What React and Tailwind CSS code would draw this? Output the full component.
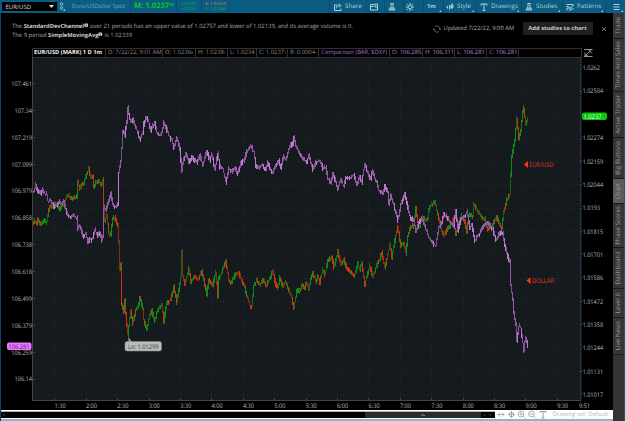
import React from "react";

const DOLLAR = "33,191 35,185 36,189 38,192 40,194 42,190 44,194 46,194 47,201 50,200 53,206 56,205 59,202 61,205 63,201 65,210 67,215 70,217 73,216 76,218 77,229 79,226 82,236 85,234 87,242 89,239 91,240 94,230 97,236 99,232 101,241 102,237 103,208 105,210 107,204 110,194 112,204 114,207 117,204 118,172 120,162 121,148 122,132 123,131 124,136 126,122 127,108 128,114 130,122 132,118 134,126 136,130 139,139 142,133 143,124 146,116 148,123 150,130 154,122 156,133 160,136 163,123 166,130 168,136 171,140 173,148 176,137 179,150 181,171 183,159 185,154 188,162 191,157 196,162 199,156 202,165 206,151 209,160 211,154 214,170 217,153 219,167 222,168 225,182 228,169 231,172 234,168 237,174 240,163 243,161 246,152 250,146 253,152 255,165 258,168 261,165 265,169 267,162 270,170 272,173 275,164 278,161 280,167 283,156 285,160 288,150 290,145 292,143 293,137 295,146 298,152 302,158 306,162 308,155 312,170 315,163 319,161 322,168 325,167 327,179 330,183 332,174 335,182 337,189 340,179 343,186 345,177 350,178 353,174 356,185 359,177 361,182 364,164 368,176 370,178 372,170 374,178 376,182 378,190 382,194 384,185 387,192 388,204 390,195 393,205 397,220 400,205 404,193 408,212 410,218 413,220 415,232 418,222 421,219 425,229 428,237 432,243 435,246 438,228 441,222 443,214 447,218 450,224 453,226 455,210 457,230 460,219 463,217 466,212 469,228 471,224 474,240 477,236 480,231 483,225 486,223 489,225 492,230 495,240 499,233 502,232 503,240 506,253 509,262 510,285 512,300 513,312 515,325 516,341 518,326 520,328 522,343 523,351 524,342 525,338 527,346";
const EURO = "33,221 36,223 37,219 40,224 42,222 44,220 46,222 48,209 50,206 52,207 54,204 57,205 59,210 62,203 63,207 65,199 67,194 70,198 76,197 77,181 79,190 81,184 83,182 85,177 87,171 88,168 90,178 92,176 93,186 95,182 98,181 101,184 102,180 103,206 104,222 106,216 108,233 110,234 112,218 114,217 117,226 118,243 119,270 120,263 121,303 123,311 124,300 126,325 127,335 130,310 132,323 135,310 138,304 139,297 142,308 143,320 146,329 148,320 151,310 154,321 157,310 161,304 163,321 166,303 170,300 173,286 176,302 178,290 180,278 181,252 182,276 184,285 188,268 190,282 194,276 198,279 201,271 203,280 206,294 208,280 212,285 215,272 217,296 218,278 221,272 225,260 228,280 231,282 235,273 238,272 241,282 243,284 246,295 249,305 251,306 253,285 256,280 260,284 262,279 265,286 268,280 272,272 275,285 277,288 279,278 282,287 285,282 289,293 291,297 293,308 296,290 299,291 301,285 304,288 306,282 308,290 310,278 312,272 315,282 317,276 319,282 322,270 324,275 327,260 331,257 333,267 335,261 337,250 340,265 343,260 346,268 350,272 354,275 357,262 359,270 361,263 364,285 366,277 369,266 372,278 376,265 380,256 381,253 384,268 387,255 389,244 391,257 394,240 397,227 400,245 403,244 405,253 407,236 409,228 413,225 415,208 418,228 422,218 427,219 428,210 430,205 434,202 437,214 440,228 443,236 447,228 450,225 452,218 455,234 458,222 461,216 464,222 466,232 468,215 472,216 473,204 477,211 480,216 484,219 487,229 491,226 496,217 499,225 501,228 503,212 506,200 509,195 510,175 511,157 513,145 514,140 516,118 518,138 520,130 522,112 523,108 525,124 527,118";

// Expands control points into one bar per pixel column.
function bars(points, seed, minimum) {
  const p = points.split(" ").map((s) => s.split(",").map(Number));
  const out = [];
  let k = 0;
  let prev = p[0][1];
  let s = seed;
  const next = () => {
    s = (s * 16807) % 2147483647;
    return s / 2147483647;
  };
  for (let x = p[0][0]; x <= p[p.length - 1][0]; x++) {
    while (k < p.length - 2 && x > p[k + 1][0]) k++;
    const [x0, y0] = p[k];
    const [x1, y1] = p[k + 1];
    const y = y0 + ((y1 - y0) * (x - x0)) / (x1 - x0);
    const r = next();
    const q = next();
    const top = Math.round(Math.min(prev, y) - r * 2.9);
    const bottom = Math.round(Math.max(prev, y) + q * 2.9);
    const d = y - prev;
    const noisy = next() > 0.72;
    const up = Math.abs(d) < 0.9 ? r > 0.5 : Math.abs(d) < 5 && noisy ? d > 0 : d < 0;
    out.push({ x, top, h: Math.max(minimum, bottom - top), up, q });
    prev = y;
  }
  return out;
}

const euroBars = bars(EURO, 4711, 4);
const dollarBars = bars(DOLLAR, 977, 2);
const left = ["107.461", "107.34", "107.219", "107.099", "106.979", "106.858", "106.738", "106.618", "106.499", "106.379", "106.259", "106.14"];
const right = ["1.0262", "1.02504", "", "1.02274", "1.02159", "1.02044", "1.0193", "1.01815", "1.01701", "1.01586", "1.01472", "1.01358", "1.01244", "1.01131", "1.01017"];
const times = ["1:30", "2:00", "2:30", "3:00", "3:30", "4:00", "4:30", "5:00", "5:30", "6:00", "6:30", "7:00", "7:30", "8:00", "8:30", "9:00", "9:30"];

const len = (t, digit = 3.18) => [...t].reduce((a, c) => a + (c === "." || c === ":" ? 1.6 : digit), 0);

function Chart() {
  return (
    <svg className="block h-[352px] w-[612px]" viewBox="1 58 612 352" fontSize="6.4">
      <rect x="33" y="58" width="549" height="342" fill="#151a1e" />
      <g stroke="#21282c" strokeWidth="1" strokeDasharray="1 2" shapeRendering="crispEdges">
        {times.map((t, i) => <path key={t} d={`M${Math.round(54.3 + i * 31.4) + 0.5} 59V400`} />)}
        {right.map((_, i) => <path key={i} d={`M34 ${Math.round(67.5 + i * 23.35) + 0.5}H581`} />)}
      </g>
      <g stroke="#434648" fill="none" shapeRendering="crispEdges">
        <path d="M32.5 58V400.5H581" />
        <path d="M580.5 58V400" strokeDasharray="1 1" />
        {times.map((t, i) => <path key={t} d={`M${Math.round(54.3 + i * 31.4) + 0.5} 398V400`} />)}
        {left.map((t, i) => <path key={t} d={`M33 ${Math.round(83.3 + i * 26.85) + 0.5}h2`} />)}
        {right.map((_, i) => <path key={i} d={`M580 ${Math.round(67.5 + i * 23.35) + 0.5}h2`} />)}
      </g>
      <g shapeRendering="crispEdges">
        {euroBars.map((b) => <rect key={b.x} x={b.x} y={b.top} width="1" height={b.h} fill={b.up ? (b.q > 0.4 ? "#128a16" : "#116818") : b.q > 0.4 ? "#c0390f" : "#82310f"} />)}
        {dollarBars.map((b) => <rect key={b.x} x={b.x} y={b.top} width="1" height={b.h} fill={b.q > 0.7 ? "#bb78cd" : b.q > 0.3 ? "#9659a5" : "#7d4f8b"} />)}
      </g>
      <g fill="#bdbdbd">
        {left.map((t, i) => <text key={t} x={32 - len(t)} y={86 + i * 26.85} textLength={len(t)} lengthAdjust="spacingAndGlyphs">{t}</text>)}
        {right.map((t, i) => t && <text key={t} x="582.5" y={70.1 + i * 23.35} textLength={len(t)} lengthAdjust="spacingAndGlyphs">{t}</text>)}
        {times.map((t, i) => <text key={t} x={54.5 + i * 31.4} y="408" textLength={len(t)} lengthAdjust="spacingAndGlyphs">{t}</text>)}
        <text x="579" y="408" textLength={len("9:51")} lengthAdjust="spacingAndGlyphs">9:51</text>
      </g>
      <rect x="582" y="112.5" width="25" height="7.5" rx="2" fill="#08c70a" />
      <text x="583.5" y="118.5" fill="#e8ffe8" textLength="18" lengthAdjust="spacingAndGlyphs">1.0237</text>
      <text x="602" y="118.5" fontSize="4" fill="#a6efa6">₇</text>
      <rect x="7" y="342.5" width="24.5" height="7.5" rx="2" fill="#e878ff" />
      <text x="8.5" y="348.5" fill="#5c1c69" textLength="21" lengthAdjust="spacingAndGlyphs">106.281</text>
      <path d="M128 337l1 5 3 0z" fill="#bbb" />
      <rect x="125" y="341.5" width="36.5" height="9.5" rx="2" fill="#b9bcb9" stroke="#858885" strokeWidth=".6" />
      <text x="128" y="348.6" fill="#343734" textLength="30.5" lengthAdjust="spacingAndGlyphs">Lo: 1.01299</text>
      <g fill="#ff3503">
        <path d="M524 164.5l4-3.5v7zM526.5 280.5l4-3.5v7z" />
        <g fill="#e03c16">
          <text x="529" y="166.8" textLength="24.5" lengthAdjust="spacingAndGlyphs">EUR/USD</text>
          <text x="532" y="282.5" textLength="22" lengthAdjust="spacingAndGlyphs">DOLLAR</text>
        </g>
      </g>
    </svg>
  );
}

const Icon = ({ d, className }) => (
  <svg className={"shrink-0 " + className} viewBox="0 0 16 16" fill="none" stroke="currentColor" strokeWidth="2"><path d={d} /></svg>
);
const FLASK = "M5 1h6M6 1v6L2 14h12L10 7V1M4 12h8M5 10h6";

function Tool({ w, label, d, more, pad = "pl-[4px]" }) {
  return (
    <div className={`relative flex h-full shrink-0 items-center gap-[3px] border-l border-[#0a4d6e] ${pad} ${w}`}>
      {d && <Icon d={d} className="h-[8px] w-[8px]" />}
      {label && <span className="whitespace-nowrap">{label}</span>}
      {more && <svg className="absolute right-[2px] bottom-[1px] h-[2px] w-[2px]" viewBox="0 0 2 2"><path d="M2 0v2H0z" fill="#b9d0dc" /></svg>}
    </div>
  );
}

function TopBar() {
  return (
    <header className="flex h-[13px] w-full items-center bg-[#0b5c83] text-[6.2px] leading-none text-[#b4ccd8]">
      <div className="ml-[2px] flex h-[9px] w-[55px] shrink-0 items-center justify-between bg-black px-[3.5px] text-[6px] text-[#ddd]">
        <span>EUR/USD</span>
        <svg className="h-[3px] w-[5px]" viewBox="0 0 5 3"><path d="M0 0h5L2.5 3z" fill="#ddd" /></svg>
      </div>
      <div className="flex h-full w-[10px] shrink-0 items-center justify-center">
        <svg className="h-[9px] w-[6px]" viewBox="0 0 6 9" fill="none" stroke="#9cbccb"><circle cx="2.5" cy="2" r="1.3" /><circle cx="2.5" cy="6" r="1.3" /><path d="M6 7v2H4z" fill="#c5d8e0" stroke="none" /></svg>
      </div>
      <div className="w-[63px] shrink-0 whitespace-nowrap pl-[5px] text-[5.9px] text-[#6da3bd]">Euro/USDollar Spot</div>
      <div className="flex h-full w-[46px] shrink-0 items-center whitespace-nowrap border-l border-[#0a4d6e] pl-[3px] text-[7.6px] font-bold text-[#0ac51c]">M: 1.0237<sup className="top-[-1px] text-[4px]">65</sup></div>
      <div className="flex h-full w-[25px] shrink-0 flex-col justify-center gap-[1px] border-l border-[#0a4d6e] pl-[4px] text-[4.3px] text-[#12a94c]"><span>+.00097</span><span>+0.09%</span></div>
      <div className="flex h-full w-[29px] shrink-0 flex-col justify-center gap-[1px] border-x border-[#0a4d6e] pl-[3px] text-[4.3px] text-[#12a94c]"><span className="text-[#d67650]">B: 1.02369</span><span>A: 1.02384</span></div>
      <div className="flex-1" />
      <Tool w="w-[37px]" label="Share" d="M7 4H1v11h13v-4M4 11c0-5 4-6 8-6M10 1l4 4-4 4" pad="pl-[4px]" />
      <Tool w="w-[18px]" d="M1 3h8M1 3v11h14V8M10 2h5v6h-5zM1 7h6" pad="pl-[3px]" />
      <Tool w="w-[19px]" d={FLASK} pad="pl-[3px]" />
      <Tool w="w-[20px]" d="M8 4.5a3.5 3.5 0 1 0 .01 0M8 0v4M8 12v4M0 8h4M12 8h4M2 2l3 3M11 11l3 3M14 2l-3 3M5 11l-3 3" pad="pl-[2px]" />
      <Tool w="w-[20px]" label={<b className="text-[5.6px]">1m</b>} more pad="pl-[3px]" />
      <Tool w="w-[33px]" label="Style" d="M1 8h3M3 6v5M7 4v9M7 8l3 3M12 1v11M10 4h4v5h-4z" more pad="pl-[2px]" />
      <Tool w="w-[45px]" label="Drawings" d="M2 5V2h12v3M8 2v13M5 15h6" more pad="pl-[3px]" />
      <Tool w="w-[41px]" label="Studies" d={FLASK} more pad="pl-[3px]" />
      <Tool w="w-[43px]" label="Patterns" d="M1 3h14M1 7h4l4 4 6-7M2 15V10h7M6 15l9-4" more pad="pl-[3px]" />
      <Tool w="w-[20px]" d="M3 3h12M3 8h12M3 13h12" more pad="pl-[6px]" />
    </header>
  );
}

function Ohlc({ w, k, v, s }) {
  return <div className={`flex h-full shrink-0 items-center whitespace-pre border-r border-[#303030] pl-[2px] ${w}`}>{k}{v}{s && <span className="mt-[2px] text-[3.5px]">{s}</span>}</div>;
}

const tabs = [
  ["Trade", "h-[26px]"], ["Times And Sales", "h-[53px]"], ["Active Trader", "h-[46px]"], ["Big Buttons", "h-[41px]"], ["Chart", "h-[25px] !bg-[#5b5b5b]"],
  ["Phase Scores", "h-[44px]"], ["Dashboard", "h-[41px]"], ["Level II", "h-[29px]"], ["Live News", "h-[37px]"],
];

export default function App() {
  return (
    <div className="flex h-[421px] w-[625px] flex-col overflow-hidden bg-black [text-rendering:geometricPrecision]" style={{ fontFamily: '"Open Sans", "Noto Sans", sans-serif' }}>
      <TopBar />
      <div className="flex min-h-0 flex-1">
        <div className="w-px shrink-0 bg-[#0b4460]" />
        <main className="flex w-[612px] shrink-0 flex-col">
          <div className="flex h-[34px] shrink-0 items-start text-[5.9px] text-[#a8a8a8]">
            <div className="w-[422px] whitespace-nowrap pl-[11px] pt-[9px] leading-[8.7px]">
              <p>The <b className="text-[5.7px] text-[#ccc]">StandardDevChannel<Info /></b><span className="tracking-[-0.02px]"> over 21 periods has an upper value of 1.02757 and lower of 1.02139, and its average volume is 0.</span></p>
              <p>The 9 period <b className="text-[5.7px] text-[#ccc]">SimpleMovingAvg<Info /></b> is 1.02339</p>
            </div>
            <div className="flex w-[190px] items-center pt-[9px]">
              <svg className="ml-[10px] mr-[2.5px] h-[8px] w-[8px] shrink-0" viewBox="0 0 8 8" fill="none" stroke="#888" strokeWidth=".7"><path d="M2 1.5a3.2 3.2 0 0 1 5 3M6 6.6A3.2 3.2 0 0 1 1 4M0 4.6L1 3.7l1 1M6 3.9l1 1 .8-1" /></svg>
              <span className="w-[79px] whitespace-nowrap text-[5.8px] text-[#b0b0b0]">Updated 7/22/22, 9:00 AM</span>
              <button className="h-[13px] w-[70px] shrink-0 whitespace-nowrap bg-[#202020] text-[5.8px] font-bold text-[#ccc]">Add studies to chart</button>
              <svg className="ml-[9px] h-[4px] w-[4px]" viewBox="0 0 4 4" stroke="#888" strokeWidth=".8"><path d="M0 0l4 4M4 0L0 4" /></svg>
            </div>
          </div>
          <div className="flex h-[11px] shrink-0 items-center pl-[31px]">
            <div className="flex h-[10px] w-[550px] border border-[#303030] text-[5.9px] leading-none text-[#8c8c8c]">
              <div className="flex w-[73px] shrink-0 items-center whitespace-nowrap border-r border-[#303030] pl-[1px] text-[5.7px] font-bold text-[#eee]">EUR/USD (MARK) 1 D 1m</div>
              <Ohlc w="w-[57px]" k="D: " v="7/22/22, 9:01 AM" />
              <Ohlc w="w-[33px]" k="O: " v="1.0236" s="8" />
              <Ohlc w="w-[32px]" k="H: " v="1.0238" s="1" />
              <Ohlc w="w-[29px]" k="L: " v="1.0234" />
              <Ohlc w="w-[31px]" k="C: " v="1.0237" s="7" />
              <Ohlc w="w-[31px]" k="R: " v="0.0004" s="1" />
              <div className="flex w-[71px] shrink-0 items-center whitespace-nowrap border-r border-[#303030] pl-[2px] text-[5.8px] text-[#b06bc5]">Comparison (BAR, $DXY)</div>
              <Ohlc w="w-[33px]" k="O: " v={<span className="text-[#c284d2]">106.285</span>} />
              <Ohlc w="w-[32px]" k="H: " v={<span className="text-[#c284d2]">106.311</span>} />
              <Ohlc w="w-[32px]" k="L: " v={<span className="text-[#c284d2]">106.281</span>} />
              <Ohlc w="w-[32px]" k="C: " v={<span className="text-[#c284d2]">106.281</span>} />
            </div>
            <svg className="ml-[2px] h-[10px] w-[9px] shrink-0" viewBox="0 0 9 10" fill="none" stroke="#b5b5b5" strokeWidth=".8"><path d="M0 1.5h8.5M0 8.5h8.5M1 4.5v3.2h3M1 7.7L7.5 2M5 2l3 3.5" /></svg>
          </div>
          <Chart />
          <footer className="flex h-[9px] shrink-0 bg-white">
            <div className="flex h-full w-[494px] shrink-0 flex-col">
              <div className="mt-[1px] h-px bg-[#bba9b8]" />
              <div className="flex h-[6px] items-center justify-between bg-black px-[2px] text-[5px] leading-none text-[#aaa]">
                <span>‹</span>
                <div className="ml-auto mr-[1px] flex h-full w-[116px] items-center justify-center bg-[#2c2c2c]">
                  <svg className="h-[2px] w-[4px]" viewBox="0 0 4 2" fill="none" stroke="#999"><path d="M0 2l2-1.5L4 2" /></svg>
                </div>
                <span className="flex w-[11px] justify-around"><i className="not-italic">‹</i><i className="not-italic">›</i></span>
              </div>
            </div>
            <div className="flex flex-1 items-center pl-[2px] text-[5.9px] leading-none text-[#b8b8b8]">
              <svg className="h-[9px] w-[54px] shrink-0" viewBox="0 0 54 9" fill="none" stroke="#999" strokeWidth=".8">
                <path d="M1 4.5h6M3 2.5l-2 2 2 2M5 2.5l2 2-2 2M14.5 1v7M11 4.5h7" /><circle cx="14.5" cy="4.5" r="2.3" />
                <circle cx="24" cy="4" r="2.9" /><path d="M26 6l2.5 2.5M22.5 4h3M24 2.5v3" />
                <circle cx="34.5" cy="4" r="2.9" /><path d="M36.5 6L39 8.5M33 4h3" />
                <path d="M43 3V1.5h6V3M46 1.5V8M44.5 8h3" strokeWidth="1" />
              </svg>
              <span className="ml-[1.5px] whitespace-nowrap">Drawing set: Default</span>
            </div>
          </footer>
          <div className="h-[2px] bg-[#8db7c9]" />
        </main>
        <aside className="flex w-[11px] shrink-0 flex-col bg-[#333]">
          {tabs.map(([t, c]) => (
            <div key={t} className={`flex shrink-0 items-center justify-center overflow-visible border-b border-[#191919] bg-[#363636] ${c}`}>
              <span className="rotate-180 whitespace-nowrap text-[6.3px] leading-none text-[#989898] [writing-mode:vertical-rl]">{t}</span>
            </div>
          ))}
        </aside>
        <div className="w-px shrink-0 bg-[#0b5c83]" />
      </div>
    </div>
  );
}

function Info() {
  return <svg className="inline-block h-[4.5px] w-[4.5px] -translate-y-[1px]" viewBox="0 0 5 5"><circle cx="2.5" cy="2.5" r="2.3" fill="#ccc" /><path d="M2.5 1v.7M2.5 2.1v2" stroke="#111" strokeWidth=".7" /></svg>;
}
